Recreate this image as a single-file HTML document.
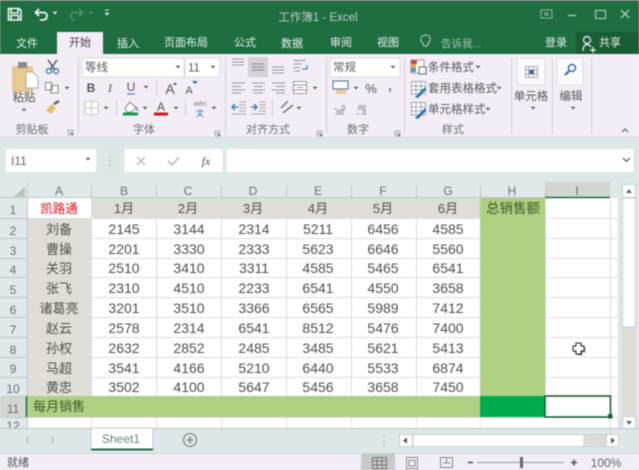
<!DOCTYPE html>
<html><head><meta charset="utf-8"><style>
html,body{margin:0;padding:0;width:639px;height:470px;overflow:hidden;background:#dfe8e8}
svg{display:block;filter:blur(.45px)}
text{font-family:"Liberation Sans","Noto Sans CJK SC",sans-serif;}
.m{text-anchor:middle}
.r{font-size:11.5px;fill:#5c5c5c}
.g{font-size:11px;fill:#6e6e6e;text-anchor:middle}
.t{font-size:11px;fill:#e6f0ea;text-anchor:middle}
.n{font-size:14px;fill:#505050;text-anchor:middle}
.c{font-size:13px;fill:#505050;text-anchor:middle}
.h{font-size:12px;fill:#6e6e6e;text-anchor:middle}
.l{stroke:#dedede;stroke-width:1}
.s{stroke:#d5d0da;stroke-width:1}
.a{fill:#666}
</style></head><body>
<svg width="639" height="470" viewBox="0 0 639 470" xmlns="http://www.w3.org/2000/svg">
<defs>
<path id="ar" d="M-2.5 -1.2H2.5L0 1.6Z"/>
<g id="lc"><path d="M0 0H5V5H0Z" fill="none" stroke="#999" stroke-width=".8"/><path d="M2 2L5 5" stroke="#555" stroke-width="1"/></g>
</defs>
<!-- title -->
<rect width="639" height="54" fill="#1f6e42"/>
<rect width="639" height="1" fill="#6d7f75"/>
<path d="M8.5 8.5H19L21 10.500V20H8.500ZM11 9V13H18V9M11 20V15.500H18.500V20" fill="none" stroke="#f0f5f2" stroke-width="1.600"/>
<path d="M39 9L35.500 12.500L39 16M36 12.500H43Q47 12.500 47 16T43 20H40" fill="none" stroke="#f0f5f2" stroke-width="1.800"/>
<use href="#ar" x="55" y="13" fill="#dfe9e3"/>
<path d="M79 9L82.500 12.500L79 16M82 12.500H75Q71 12.500 71 16T75 20" fill="none" stroke="#4f8c69" stroke-width="1.800"/>
<use href="#ar" x="91" y="13" fill="#4f8c69"/>
<path d="M105 10H109" stroke="#dfe9e3" stroke-width="1"/><use href="#ar" x="107" y="14" fill="#dfe9e3"/>
<text x="318" y="21" font-size="11.500" fill="#b7d0c1" text-anchor="middle">工作簿1 - Excel</text>
<path d="M541 10H552V18H541ZM545 13H548V15H545Z" fill="none" stroke="#8fb5a0"/>
<path d="M568 15.500H576" stroke="#a5c4b2" stroke-width="1.500"/>
<path d="M595.500 10.500H605.500V18.500H595.500Z" fill="none" stroke="#a5c4b2" stroke-width="1.200"/>
<path d="M621 10L629 18M629 10L621 18" stroke="#a5c4b2" stroke-width="1.500"/>
<!-- tabs -->
<rect x="57" y="32" width="46" height="23" fill="#f3eef6"/>
<text class="t" x="27" y="47">文件</text>
<text x="80" y="46" font-size="11px" fill="#444" text-anchor="middle">开始</text>
<text class="t" x="128" y="47">插入</text>
<text class="t" x="186" y="46">页面布局</text>
<text class="t" x="245" y="46">公式</text>
<text class="t" x="292" y="47">数据</text>
<text class="t" x="341" y="46">审阅</text>
<text class="t" x="388" y="46">视图</text>
<path d="M429 35.500A4 4 0 0 1 433 43L432.500 46H428.500L428 43A4 4 0 0 1 429 35.500Z" fill="none" stroke="#b7d0c1" transform="translate(-5 0)"/>
<text x="441" y="47" font-size="10.500px" fill="#a5c4b2">告诉我...</text>
<text class="t" x="556" y="46">登录</text>
<rect x="576" y="32" width="63" height="22" fill="#1a5c36"/>
<circle cx="587" cy="40" r="3.500" fill="none" stroke="#f0f5f2" stroke-width="1.200"/>
<path d="M583 51Q583 45 587 44.500Q590 45 591 47M590 50H596M593 47V53" fill="none" stroke="#f0f5f2" stroke-width="1.200"/>
<text class="t" x="610" y="46">共享</text>
<!-- ribbon -->
<rect y="54" width="639" height="83" fill="#f3eef6"/>
<rect y="137" width="639" height="1" fill="#d3dbdb"/>
<!-- separators -->
<path class="s" d="M78.500 58V134M225.500 58V134M326.500 58V134M404.500 58V134M511.500 58V134M552.500 58V134M591.500 58V134M156.500 80V96M116.500 99V116M185.500 99V116M272.500 99V116"/>
<!-- clipboard -->
<rect x="12" y="66" width="21" height="26" fill="#e7c88f"/>
<rect x="18" y="62" width="9" height="6" fill="#8a8a8a"/>
<path d="M26 72H33L38 77V88H26Z" fill="#fff" stroke="#999" stroke-width=".8"/>
<text x="24" y="101" font-size="11.500" fill="#555" text-anchor="middle">粘贴</text>
<use href="#ar" x="24" y="110" fill="#666"/>
<path d="M48 60L55 70M57 60L50 70" stroke="#555" stroke-width="1.500"/>
<circle cx="49" cy="71" r="2.500" fill="none" stroke="#3a6ea5" stroke-width="1.200"/><circle cx="56" cy="71" r="2.500" fill="none" stroke="#3a6ea5" stroke-width="1.200"/>
<path d="M45.500 82.500H52V90H45.500ZM51 85.500H58V93H51Z" fill="#fdfdfd" stroke="#888"/>
<use href="#ar" x="67" y="88" fill="#666"/>
<path d="M46 110L52 104L56 108L51 114Z" fill="#e6c060"/><path d="M54 104L59 101" stroke="#666" stroke-width="2.500"/>
<text class="g" x="32" y="133">剪贴板</text>
<use href="#lc" x="68" y="130"/>
<!-- font -->
<rect x="82" y="58" width="102" height="19" fill="#fff" stroke="#dcd8e0"/>
<text class="r" x="85" y="71">等线</text><use href="#ar" x="178" y="67" fill="#666"/>
<rect x="185" y="58" width="35" height="19" fill="#fff" stroke="#dcd8e0"/>
<text class="r" x="188" y="71.500">11</text><use href="#ar" x="213" y="67" fill="#666"/>
<text x="91" y="92" font-size="12px" font-weight="bold" fill="#555" text-anchor="middle">B</text>
<text x="110" y="92" font-size="12px" font-style="italic" style="font-family:'Liberation Serif',serif" fill="#555" text-anchor="middle">I</text>
<text x="131" y="91" font-size="12px" fill="#555" text-anchor="middle">U</text><path d="M127 94H135" stroke="#3a6ea5"/>
<use href="#ar" x="146" y="87" fill="#666"/>
<text x="170" y="94" font-size="14px" fill="#555" text-anchor="middle">A</text><path d="M173 85L175 82L177 85" fill="#3a6ea5"/>
<text x="189" y="94" font-size="11px" fill="#555" text-anchor="middle">A</text><path d="M192 81H198L195 84Z" fill="#3a6ea5"/>
<path d="M85 101.500H98V114.500H85ZM91.500 102V114M85.500 108H98" fill="#fff" stroke="#c8c8c8"/>
<use href="#ar" x="106" y="108" fill="#666"/>
<path d="M125 108L130 102L136 108L131 112L127 112Z" fill="#fff" stroke="#888"/><path d="M136 107L138 111" stroke="#3a6ea5"/>
<rect x="123" y="112.500" width="15" height="3" fill="#0aa14b"/>
<use href="#ar" x="145" y="108" fill="#666"/>
<text x="161" y="111" font-size="12px" fill="#555" text-anchor="middle">A</text>
<rect x="154" y="112.500" width="14" height="3" fill="#e3101a"/>
<use href="#ar" x="176" y="108" fill="#666"/>
<text x="200" y="106" font-size="7px" fill="#777" text-anchor="middle">wén</text>
<text x="200" y="116" font-size="8px" fill="#2f5f96" text-anchor="middle">文</text>
<use href="#ar" x="214" y="108" fill="#666"/>
<text class="g" x="144" y="133">字体</text>
<use href="#lc" x="215" y="131"/>
<!-- align -->
<rect x="248" y="57" width="20" height="20" fill="#d4d2d4"/>
<path d="M232 59H244M232 62H244M232 65H244" stroke="#999"/>
<path d="M252 64H264M252 67H264M252 70H264" stroke="#888"/>
<path d="M272 67H284M272 70H284M272 73H284" stroke="#999"/>
<path d="M293.500 60.500H306M293.500 64H302M293.500 67.500H300M293.500 71H300" stroke="#999"/><path d="M302 69H307V65" fill="none" stroke="#3a6ea5"/>
<path d="M232 83H245M232 86.500H241M232 90H245M232 93H241" stroke="#999"/>
<path d="M252 83H265M254 86.500H263M252 90H265M254 93H263" stroke="#999"/>
<path d="M272 83H285M276 86.500H285M272 90H285M276 93H285" stroke="#999"/>
<path d="M293.500 81.500H306.500V93.500H293.500ZM294 85H306M294 90H306M297 87.500H303" fill="#fff" stroke="#999"/>
<use href="#ar" x="315" y="88" fill="#666"/>
<path d="M239 102H246M239 105H246M239 108H246M239 111H246M232 114H246" stroke="#aaa"/><path d="M232 107H238M235 104L232 107L235 110" fill="none" stroke="#2f6fb0" stroke-width="1.200"/>
<path d="M259 102H266M259 105H266M259 108H266M259 111H266M251 114H266" stroke="#aaa"/><path d="M251 107H257M254 104L257 107L254 110" fill="none" stroke="#2f6fb0" stroke-width="1.200"/>
<path d="M281 108L288 101M283 113L293 105" stroke="#777" stroke-width="1.500"/>
<use href="#ar" x="299" y="108" fill="#666"/>
<text class="g" x="268" y="133">对齐方式</text>
<use href="#lc" x="317" y="131"/>
<!-- number -->
<rect x="330" y="58" width="70" height="19" fill="#fff" stroke="#dcd8e0"/>
<text class="r" x="333" y="71">常规</text><use href="#ar" x="393" y="67" fill="#666"/>
<rect x="333" y="81" width="15" height="8" fill="#fff" stroke="#3a6ea5"/><path d="M336 90H346V94H336Z" fill="#e7c88f"/>
<use href="#ar" x="356" y="88" fill="#666"/>
<text x="371" y="93" font-size="13px" fill="#555" text-anchor="middle">%</text>
<text x="390" y="90" font-size="12px" font-weight="bold" fill="#555" text-anchor="middle">,</text>
<text x="339" y="110" font-size="7px" fill="#666" text-anchor="middle">←.0</text><text x="339" y="115" font-size="7px" fill="#666" text-anchor="middle">.00</text>
<text x="361" y="110" font-size="7px" fill="#666" text-anchor="middle">.00</text><text x="360" y="115" font-size="7px" fill="#666" text-anchor="middle">→.0</text>
<text class="g" x="358" y="133">数字</text>
<use href="#lc" x="395" y="131"/>
<!-- styles -->
<rect x="411" y="60" width="13" height="13" fill="#fff" stroke="#999"/>
<rect x="411" y="60" width="6" height="4" fill="#c0504d"/><rect x="411" y="64" width="5" height="4" fill="#e7a74a"/><rect x="411" y="68" width="5" height="4" fill="#5b8fc9"/>
<rect x="419" y="67" width="7" height="7" fill="#fff" stroke="#666"/>
<text class="r" x="428" y="71">条件格式</text><use href="#ar" x="478" y="67" fill="#666"/>
<path d="M411.500 81.500H425.500V94H411.500ZM416 82V94M421 82V94M412 86H425M412 90H425" fill="#fff" stroke="#9aa"/><path d="M415 97L425 87L426 90L418 98Z" fill="#2f6fb0"/>
<text class="r" x="428" y="92">套用表格格式</text><use href="#ar" x="499" y="88" fill="#666"/>
<path d="M411.500 102.500H425.500V115H411.500ZM416 103V115M421 103V115M412 107H425M412 111H425" fill="#fff" stroke="#9aa"/><path d="M415 118L425 108L426 111L418 119Z" fill="#2f6fb0"/>
<text class="r" x="428" y="113">单元格样式</text><use href="#ar" x="488" y="109" fill="#666"/>
<text class="g" x="453" y="133">样式</text>
<!-- cells -->
<rect x="517" y="58" width="28" height="27" fill="#fbfafc" stroke="#e0dde3"/>
<path d="M525.500 66.500H537.500V77.500H525.500ZM529 67V77M533.500 67V77M526 70H537M526 74H537" fill="none" stroke="#aaa"/>
<rect x="529" y="70" width="5" height="4" fill="#3a6ea5"/>
<text x="531" y="100" font-size="11.500" fill="#555" text-anchor="middle">单元格</text>
<use href="#ar" x="533" y="108" fill="#666"/>
<rect x="557" y="58" width="26" height="27" fill="#fbfafc" stroke="#e0dde3"/>
<circle cx="572" cy="68" r="3.500" fill="none" stroke="#2f6fb0" stroke-width="1.500"/><path d="M569 71L565 75" stroke="#2f6fb0" stroke-width="2"/>
<text x="571" y="100" font-size="11.500" fill="#555" text-anchor="middle">编辑</text>
<use href="#ar" x="573" y="108" fill="#666"/>
<path d="M622 132L625 129L628 132" fill="none" stroke="#666" stroke-width="1.200"/>
<!-- formula bar -->
<rect x="6" y="149" width="90" height="23" fill="#fff"/>
<text x="11" y="165" font-size="12px" fill="#666">I11</text>
<use href="#ar" x="88" y="159" fill="#666"/>
<path d="M110 156V158M110 160V162M110 164V166" stroke="#a9b3b3"/>
<rect x="124.500" y="149" width="98" height="23" fill="#fff"/>
<path d="M137 157L145 165M145 157L137 165" stroke="#bbb" stroke-width="1.300"/>
<path d="M168 161L172 165L179 157" fill="none" stroke="#bbb" stroke-width="1.600"/>
<text x="206" y="165" font-size="12px" font-style="italic" style="font-family:'Liberation Serif',serif" fill="#555" text-anchor="middle">fx</text>
<rect x="226.500" y="149" width="407" height="23" fill="#fff"/>
<path d="M623 158L626.500 161.500L630 158" fill="none" stroke="#666" stroke-width="1.300"/>
<!-- grid background -->
<rect x="0" y="182" width="619" height="16" fill="#e0e8ea"/>
<rect x="0" y="198" width="27" height="230" fill="#e0e8ea"/>
<rect x="27" y="198" width="592" height="230" fill="#fff"/>
<!-- fills -->
<rect x="27" y="218" width="64" height="178" fill="#dfddd7"/>
<rect x="91" y="198" width="389" height="20" fill="#dfddd7"/>
<rect x="480" y="198" width="65" height="198" fill="#afcf83"/>
<rect x="27" y="396" width="453" height="21" fill="#afcf83"/>
<rect x="480" y="396" width="65" height="21" fill="#00ac4d"/>
<rect x="545" y="182" width="65" height="16" fill="#d2d6d0"/>
<rect x="0" y="396" width="27" height="21" fill="#d2d6d0"/>
<!-- grid lines -->
<path class="l" d="M91.500 218V396M91.500 417V428M156.500 218V396M156.500 417V428M221.500 218V396M221.500 417V428M286.500 218V396M286.500 417V428M351.500 218V396M351.500 417V428M416.500 218V396M416.500 417V428M480.500 417V428M545.500 198V396M610.500 198V428M618.500 198V428"/>
<path class="l" d="M91 218.500H480M91 238.500H480M91 258.500H480M91 277.500H480M91 297.500H480M91 317.500H480M91 337.500H480M91 357.500H480M91 377.500H480M27 417.500H619M545 218.500H619M545 238.500H619M545 258.500H619M545 277.500H619M545 297.500H619M545 317.500H619M545 337.500H619M545 357.500H619M545 377.500H619M545 396.500H619"/>
<path d="M27.500 182V428M91.500 186V198M156.500 186V198M221.500 186V198M286.500 186V198M351.500 186V198M416.500 186V198M480.500 186V198M545.500 186V198M0 218.500H27M0 238.500H27M0 258.500H27M0 277.500H27M0 297.500H27M0 317.500H27M0 337.500H27M0 357.500H27M0 377.500H27M0 396.500H27M0 417.500H27" stroke="#bfc8ca" stroke-width="1"/>
<path d="M0 197.500H545M619 197.500H620" stroke="#bfc8ca"/>
<path d="M545 197.500H610" stroke="#1f6e42" stroke-width="1.600"/>
<path d="M26.500 396V417" stroke="#1f6e42" stroke-width="1.600"/>
<path d="M14 197L25 186V197Z" fill="#b9c2c4"/>
<!-- headers -->
<text class="h" x="59" y="195">A</text><text class="h" x="124" y="195">B</text><text class="h" x="188" y="195">C</text><text class="h" x="253" y="195">D</text><text class="h" x="318" y="195">E</text><text class="h" x="383" y="195">F</text><text class="h" x="448" y="195">G</text><text class="h" x="512" y="195">H</text><text class="h" x="577" y="195">I</text>
<text class="h" x="13" y="214">1</text><text class="h" x="13" y="235">2</text><text class="h" x="13" y="255">3</text><text class="h" x="13" y="274">4</text><text class="h" x="13" y="294">5</text><text class="h" x="13" y="314">6</text><text class="h" x="13" y="334">7</text><text class="h" x="13" y="354">8</text><text class="h" x="13" y="373">9</text><text class="h" x="13" y="393">10</text><text class="h" x="13" y="413">11</text><text class="h" x="13" y="430">12</text>
<!-- row 1 -->
<text x="59" y="213" font-size="12.500" fill="#e3101a" text-anchor="middle">凯路通</text>
<text class="c" x="124" y="213">1月</text><text class="c" x="188" y="213">2月</text><text class="c" x="253" y="213">3月</text><text class="c" x="318" y="213">4月</text><text class="c" x="383" y="213">5月</text><text class="c" x="448" y="213">6月</text>
<text x="513" y="213" font-size="13.500" fill="#3f5a2a" text-anchor="middle">总销售额</text>
<!-- names -->
<text class="c" x="59" y="234">刘备</text><text class="c" x="59" y="254">曹操</text><text class="c" x="59" y="273">关羽</text><text class="c" x="59" y="293">张飞</text><text class="c" x="59" y="313">诸葛亮</text><text class="c" x="59" y="333">赵云</text><text class="c" x="59" y="353">孙权</text><text class="c" x="59" y="373">马超</text><text class="c" x="59" y="392">黄忠</text>
<!-- data -->
<text class="n" x="124" y="234">2145</text><text class="n" x="189" y="234">3144</text><text class="n" x="254" y="234">2314</text><text class="n" x="318" y="234">5211</text><text class="n" x="383" y="234">6456</text><text class="n" x="448" y="234">4585</text>
<text class="n" x="124" y="254">2201</text><text class="n" x="189" y="254">3330</text><text class="n" x="254" y="254">2333</text><text class="n" x="318" y="254">5623</text><text class="n" x="383" y="254">6646</text><text class="n" x="448" y="254">5560</text>
<text class="n" x="124" y="273">2510</text><text class="n" x="189" y="273">3410</text><text class="n" x="254" y="273">3311</text><text class="n" x="318" y="273">4585</text><text class="n" x="383" y="273">5465</text><text class="n" x="448" y="273">6541</text>
<text class="n" x="124" y="293">2310</text><text class="n" x="189" y="293">4510</text><text class="n" x="254" y="293">2233</text><text class="n" x="318" y="293">6541</text><text class="n" x="383" y="293">4550</text><text class="n" x="448" y="293">3658</text>
<text class="n" x="124" y="313">3201</text><text class="n" x="189" y="313">3510</text><text class="n" x="254" y="313">3366</text><text class="n" x="318" y="313">6565</text><text class="n" x="383" y="313">5989</text><text class="n" x="448" y="313">7412</text>
<text class="n" x="124" y="333">2578</text><text class="n" x="189" y="333">2314</text><text class="n" x="254" y="333">6541</text><text class="n" x="318" y="333">8512</text><text class="n" x="383" y="333">5476</text><text class="n" x="448" y="333">7400</text>
<text class="n" x="124" y="353">2632</text><text class="n" x="189" y="353">2852</text><text class="n" x="254" y="353">2485</text><text class="n" x="318" y="353">3485</text><text class="n" x="383" y="353">5621</text><text class="n" x="448" y="353">5413</text>
<text class="n" x="124" y="373">3541</text><text class="n" x="189" y="373">4166</text><text class="n" x="254" y="373">5210</text><text class="n" x="318" y="373">6440</text><text class="n" x="383" y="373">5533</text><text class="n" x="448" y="373">6874</text>
<text class="n" x="124" y="392">3502</text><text class="n" x="189" y="392">4100</text><text class="n" x="254" y="392">5647</text><text class="n" x="318" y="392">5456</text><text class="n" x="383" y="392">3658</text><text class="n" x="448" y="392">7450</text>
<text x="33" y="411" font-size="13px" fill="#3f5a2a">每月销售</text>
<!-- selection -->
<rect x="545" y="396" width="65.500" height="21" fill="none" stroke="#1f5f3a" stroke-width="1.600"/>
<rect x="608" y="414" width="4.500" height="4.500" fill="#1f5f3a"/>
<!-- cursor -->
<path d="M576 343H581V346H584V351H581V354H576V351H573V346H576Z" fill="#555" transform="translate(1.500 1.500)" opacity=".6"/>
<path d="M576 343H581V346H584V351H581V354H576V351H573V346H576Z" fill="#fff" stroke="#222" stroke-width="1"/>
<!-- v scrollbar -->
<rect x="619" y="182" width="20" height="246" fill="#dfe8e8"/>
<rect x="622" y="184" width="14" height="244" fill="#dcdcd6"/>
<rect x="622.500" y="198" width="13" height="129" fill="#fff" stroke="#c9cfcf"/>
<rect x="622.500" y="184.500" width="13" height="13" fill="#fff" stroke="#c9cfcf"/>
<path d="M626 193L629 189L632 193Z" fill="#666"/>
<rect x="622.500" y="416.500" width="13" height="12" fill="#fff" stroke="#c9cfcf"/>
<path d="M626 421H632L629 425Z" fill="#666"/>
<!-- sheet tabs -->
<rect x="0" y="428" width="639" height="25" fill="#dfe8e8"/>
<rect x="0" y="428" width="639" height="1" fill="#bcc6c6"/>
<path d="M29 437L26 440L29 443" fill="none" stroke="#b7c1c1" stroke-width="1.500"/>
<path d="M51 437L54 440L51 443" fill="none" stroke="#b7c1c1" stroke-width="1.500"/>
<rect x="91" y="428" width="62" height="22" fill="#fff" stroke="#c4cccc"/>
<path d="M91 449.500H153" stroke="#1f6e42" stroke-width="2"/>
<text x="121" y="443" font-size="12px" fill="#6a8878" text-anchor="middle">Sheet1</text>
<circle cx="190" cy="440" r="6.500" fill="none" stroke="#777" stroke-width="1.100"/><path d="M186.500 440H193.500M190 436.500V443.500" stroke="#666" stroke-width="1.100"/>
<path d="M384 436V438M384 440V442M384 444V446" stroke="#aeb8b8"/>
<rect x="399.500" y="434.500" width="210" height="12" fill="#dcdcd6" stroke="#c9cfcf"/>
<rect x="399.500" y="434.500" width="13" height="12" fill="#fff" stroke="#c9cfcf"/>
<path d="M403 440.500L407 437.500V443.500Z" fill="#555"/>
<rect x="413" y="434.500" width="171" height="12" fill="#fff" stroke="#c9cfcf"/>
<rect x="606.500" y="434.500" width="12" height="12" fill="#fff" stroke="#c9cfcf"/>
<path d="M615 440.500L611 437.500V443.500Z" fill="#555"/>
<!-- status -->
<rect x="0" y="453" width="639" height="17" fill="#f3eef6"/>
<rect x="0" y="453" width="639" height="1" fill="#d0d4d4"/>
<text x="7" y="466" font-size="11px" fill="#555">就绪</text>
<rect x="361" y="454" width="34" height="16" fill="#c9c9c9"/>
<path d="M372.500 457.500H386.500V468.500H372.500ZM372.500 461H386.500M372.500 465H386.500M377 457.500V468.500M382 457.500V468.500" fill="none" stroke="#777"/>
<path d="M406.500 457.500H417.500V468.500H406.500ZM409 460.500H415V466H409Z" fill="none" stroke="#888"/>
<path d="M440.500 457.500H452.500V467.500H440.500ZM446.500 458V463M443 463H450" fill="none" stroke="#888"/>
<path d="M468 462.500H473" stroke="#555" stroke-width="1.600"/>
<path d="M477 462.500H564" stroke="#999"/>
<rect x="520" y="457" width="3" height="11" fill="#666"/>
<path d="M571 462.500H577M574 459.500V465.500" stroke="#555" stroke-width="1.600"/>
<text x="606" y="467" font-size="12px" fill="#666" text-anchor="middle">100%</text>
</svg>
</body></html>
